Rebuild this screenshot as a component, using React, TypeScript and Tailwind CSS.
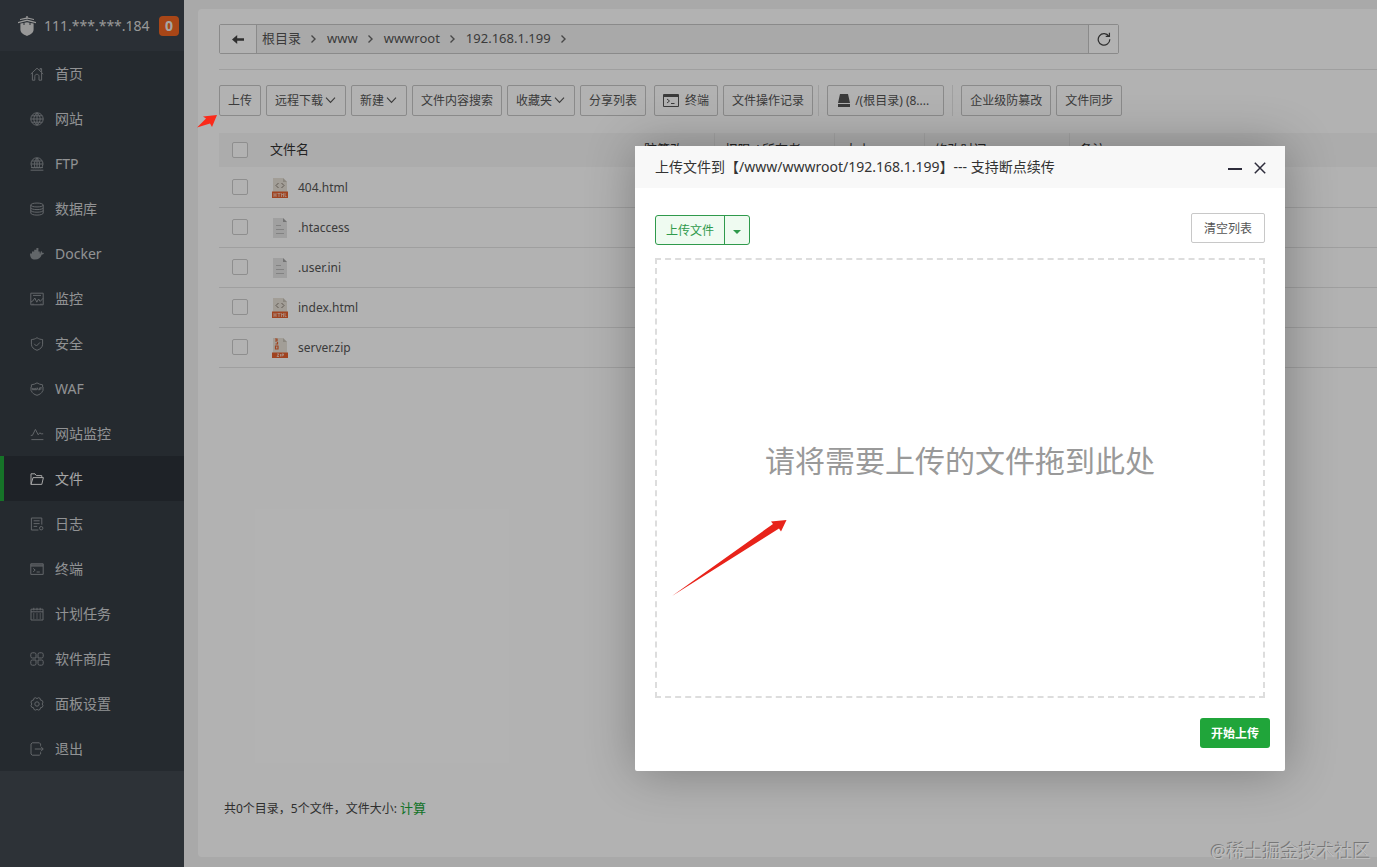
import { Fragment, type ReactNode } from "react";
import clsx from "clsx";

type MenuItem = { label: string; icon: ReactNode; active?: boolean };
type FileKind = "html" | "text" | "zip";

const toolClass =
    "flex h-[31px] shrink-0 items-center rounded-xs border border-[#c6c6c6] bg-white px-2 text-xs whitespace-nowrap text-[#555]";
const checkboxClass = "block size-4 appearance-none rounded-xs border border-[#ccc] bg-white";

const menu: MenuItem[] = [
    { label: "首页", icon: <path d="M.8 7 7 1.2 13.2 7M10 3.6V1.6h1.6v3.6M2.4 6v7.2h2.4V9.4c0-2.8 4.2-2.8 4.2 0v3.8h2.6V6" /> },
    {
        label: "网站",
        icon: <path d="M13.2 7A6.2 6.2 0 1 1 .8 7a6.2 6.2 0 0 1 12.4 0ZM.8 7h12.4M1.8 3.8h10.4M1.8 10.2h10.4M7 .8v12.4M7 .8c-4.2 3.6-4.2 8.8 0 12.4M7 .8c4.2 3.6 4.2 8.8 0 12.4" />,
    },
    {
        label: "FTP",
        icon: <path d="M3.2 11.4a6 6 0 1 1 7.6 0M1 7h12M2 4h10M7 1v10.4M7 1C4 4.4 4 8 5.2 11.4M7 1c3 3.4 3 7 1.8 10.4M.6 13.2h12.8M1 10.6h12" />,
    },
    {
        label: "数据库",
        icon: <path d="M.8 3c0-2.6 12.4-2.6 12.4 0S.8 5.6.8 3ZM.8 3v8c0 2.8 12.4 2.8 12.4 0V3M.8 5.8c0 2.4 12.4 2.4 12.4 0M.8 8.4c0 2.4 12.4 2.4 12.4 0" />,
    },
    {
        label: "Docker",
        icon: <path fill="currentColor" stroke="none" d="M0 6.6h2V4.6h2.2V2.8h2.2V1h2v3.6h1.4v2h.8c-.3-1.1 0-2 .6-2.5.6.4.9 1 .9 1.7.7-.1 1.3 0 1.9.4-.4.9-1.2 1.2-2.2 1.2C10.7 10.8 8.5 12.6 5 12.6c-3.4 0-5-2.2-5-6Z" />,
    },
    {
        label: "监控",
        icon: <path d="M.8 1.2h12.4v11.6H.8ZM3 3.4h8M.8 10l2-1 2-3 2 4.2L8.6 7l1.6 2.4 3-3.2M3 12.8v-1.2M11 12.8v-1.2" />,
    },
    { label: "安全", icon: <path d="M7 .7c1.8 1.3 3.6 1.8 5.6 1.8v4.7c0 3-2.4 5-5.6 6.1-3.2-1.1-5.6-3.1-5.6-6.1V2.5C3.4 2.5 5.2 2 7 .7ZM4.2 6.8l2.2 2.2 3.6-3.6" /> },
    {
        label: "WAF",
        icon: <path d="M1.4 5V2.8C3.4 2.6 5.2 2 7 .9c1.8 1.1 3.6 1.7 5.6 1.9V5M1.4 8.8c.6 2.3 2.8 3.7 5.6 4.5 2.8-.8 5-2.2 5.6-4.5M1 5v3.8M13 5v3.8M2 5.8l1 2.4 1-2 1 2 1-2.4M6.4 8.2l1-2.4 1 2.4M9.6 8.2V5.8h2.2M9.6 7h1.8" />,
    },
    { label: "网站监控", icon: <path d="M.8 8.4h1.6L5.4 2.4l2.8 5.4 1.6-2 1.4 1h2M1.4 12.6h12" /> },
    { label: "文件", active: true, icon: <path d="M1 12.4V1.8h4l1.4 1.8h5.4v2M1 12.4 3 5.6h10.4l-1.6 6.8H1Z" /> },
    {
        label: "日志",
        icon: <path d="M8.4 13H1.4V1h10.4v6.6M3.6 3.8h6M3.6 6.6h6M3.6 9.4h3.6M12.9 11.2a1.7 1.7 0 1 1-3.4 0 1.7 1.7 0 0 1 3.4 0Z" />,
    },
    { label: "终端", icon: <path d="M.8 1.8h12.4v10.6H.8ZM.8 3h12.4M.8 4h12.4M3.2 6.4l2 1.7-2 1.7M6.6 10h3.2" /> },
    {
        label: "计划任务",
        icon: <path d="M1 2.2h12V13H1ZM1 4.8h12M3.8.8v2.6M7 .8v2.6M10.2.8v2.6M3 7h1.4M6.3 7h1.4M9.6 7H11M3 9h1.4M6.3 9h1.4M9.6 9H11M3 11h1.4M6.3 11h1.4M9.6 11H11" />,
    },
    {
        label: "软件商店",
        icon: <path d="M2.4.8h2A1.6 1.6 0 0 1 6 2.4V6H2.4A1.6 1.6 0 0 1 .8 4.4v-2A1.6 1.6 0 0 1 2.4.8ZM9.6.8h2a1.6 1.6 0 0 1 1.6 1.6v2A1.6 1.6 0 0 1 11.6 6H8V2.4A1.6 1.6 0 0 1 9.6.8ZM2.4 8H6v3.6a1.6 1.6 0 0 1-1.6 1.6h-2a1.6 1.6 0 0 1-1.6-1.6v-2A1.6 1.6 0 0 1 2.4 8ZM8 8h3.6a1.6 1.6 0 0 1 1.6 1.6v2a1.6 1.6 0 0 1-1.6 1.6h-2A1.6 1.6 0 0 1 8 11.6Z" />,
    },
    {
        label: "面板设置",
        icon: <path d="M7 1.6 8.6.7l1.5.7.4 1.7 1.7.4.8 1.6L12.200 7l.8 1.7-.8 1.600-1.700.400-.400 1.700-1.500.7L7 12.400l-1.600.7-1.500-.7-.4-1.700-1.700-.4L1 8.700 1.800 7 1 5.100l.8-1.600 1.700-.4.4-1.700L5.400.700ZM9.200 7a2.200 2.200 0 1 1-4.400 0 2.200 2.200 0 0 1 4.400 0Z" />,
    },
    { label: "退出", icon: <path d="M10.6 3.8V2L9.4.8H2.200L1 2v10l1.200 1.200h7.200l1.200-1.200v-1.800M4.800 7h8.400M10.800 4.600 13.200 7l-2.400 2.400" /> },
];

const crumbs = ["根目录", "www", "wwwroot", "192.168.1.199"];

const files: { name: string; kind: FileKind }[] = [
    { name: "404.html", kind: "html" },
    { name: ".htaccess", kind: "text" },
    { name: ".user.ini", kind: "text" },
    { name: "index.html", kind: "html" },
    { name: "server.zip", kind: "zip" },
];

const columns = [
    { label: "防篡改", width: "w-20" },
    { label: "权限 / 所有者", width: "w-[120px]" },
    { label: "大小", width: "w-[90px]" },
    { label: "修改时间", width: "w-[145px]" },
    { label: "备注", width: "" },
];

function Chevron() {
    return (
        <svg className="size-2 shrink-0" viewBox="0 0 8 8" fill="none" stroke="#666" strokeWidth="1.4">
            <path d="M1.500.6 5 4 1.500 7.400" />
        </svg>
    );
}

function Caret() {
    return (
        <svg className="ml-px h-[7px] w-[13px]" viewBox="0 0 13 7" fill="none" stroke="#555" strokeWidth="1.1">
            <path d="m2 .6 4.500 4.800L11 .6" />
        </svg>
    );
}

function FileIcon({ kind }: { kind: FileKind }) {
    return (
        <svg className="h-5 w-4 shrink-0" viewBox="0 0 16 20">
            <path d="M1 0h10l4 4v16H1Z" fill={kind === "text" ? "#e6e6e6" : "#e8e2d8"} />
            <path d="M11 0v4h4Z" fill={kind === "text" ? "#a5a5a5" : "#c9c3b8"} />
            {kind === "text" && <path d="M4 7.500h5M4 11.500h8M4 15.500h8" stroke="#bbb" />}
            {kind === "html" && (
                <>
                    <path d="M6.500 5 4 7.500 6.500 10M9.500 5 12 7.500 9.500 10" fill="none" stroke="#8a7f76" />
                    <path d="M0 13.500h16V20H0Z" fill="#e5602f" />
                    <path d="M2 15v4M2 17h2M4 15v4M5.500 15.500h3M7 15.500V19M9.500 19v-3.500l1 1.500 1-1.500V19M13 15v3.500h1.500" fill="none" stroke="#f6d3c4" strokeWidth=".8" />
                </>
            )}
            {kind === "zip" && (
                <>
                    <path d="M3 1h2v2H3M5.500 4v2H3.500M3.500 8h2.500v3H3.500Z" fill="none" stroke="#e5602f" strokeWidth="1.200" />
                    <path d="M0 14.500h16V20H0Z" fill="#e5602f" />
                    <path d="M5 16h2l-2 2.500h2M8.500 16v2.500M10 18.500V16h1.500v1.200H10" fill="none" stroke="#f6d3c4" strokeWidth=".9" />
                </>
            )}
        </svg>
    );
}

function Sidebar() {
    return (
        <aside className="w-[184px] shrink-0 bg-[#414850]">
            <div className="flex h-[51px] items-center bg-[#3d444c] pr-[5px] pl-[18px]">
                <svg className="h-5 w-[18px]" viewBox="0 0 18 20" fill="#dadada">
                    <path d="M8.300 0h1.400v1.500L16 3v1L9.700 2.800 2 4V3l6.300-1.500ZM0 6l9-2.600L18 6v1.200L9 5 0 7.200Z" />
                    <path d="M2.400 7.600 5.500 7v2h1V6.800L9 6.200l2.500.6V9h1V7l3.100.6v6c0 3-2.400 5-6.600 6.400-4.200-1.400-6.600-3.400-6.600-6.400Z" />
                </svg>
                <span className="ml-2 text-sm text-[#dadada]">111.***.***.184</span>
                <span className="ml-auto flex size-5 items-center justify-center rounded-sm bg-[#f16522] text-sm font-bold text-[#eee]">
                    0
                </span>
            </div>
            <nav className="bg-[#363d44]">
                {menu.map((item) => (
                    <a
                        key={item.label}
                        href="#"
                        className={clsx(
                            "flex h-[45px] items-center gap-[11px] border-l-4 pl-[26px] text-sm",
                            item.active
                                ? "border-[#20a53a] bg-[#2c3138] text-[#eee]"
                                : "border-transparent text-[#d0d2d4]"
                        )}
                    >
                        <svg
                            className={clsx("size-[14px]", !item.active && "text-[#8d9297]")}
                            viewBox="0 0 14 14"
                            fill="none"
                            stroke="currentColor"
                            strokeWidth="1"
                        >
                            {item.icon}
                        </svg>
                        {item.label}
                    </a>
                ))}
            </nav>
        </aside>
    );
}

function PathBar() {
    return (
        <div className="flex h-[30px] w-[900px] max-w-full rounded-xs border border-[#c6c6c6] bg-[#f3f3f3] text-[13px] text-[#555]">
            <button type="button" aria-label="返回" className="flex w-[37px] items-center justify-center border-r border-[#c6c6c6] bg-white">
                <svg className="h-[9px] w-3" viewBox="0 0 12 9" fill="#444">
                    <path d="M0 4.500 5.200 0v3.300H12v2.400H5.200V9Z" />
                </svg>
            </button>
            <div className="flex grow items-center gap-[9px] pl-[5px]">
                {crumbs.map((crumb) => (
                    <Fragment key={crumb}>
                        <a href="#">{crumb}</a>
                        <Chevron />
                    </Fragment>
                ))}
            </div>
            <button type="button" aria-label="刷新" className="flex w-[30px] items-center justify-center border-l border-[#c6c6c6] bg-white">
                <svg className="size-[14px]" viewBox="0 0 16 16" fill="none" stroke="#444" strokeWidth="1.400">
                    <path d="M13.600 5A6.600 6.600 0 1 0 14.600 8.400M14.200.8V5H10" />
                </svg>
            </button>
        </div>
    );
}

function Toolbar() {
    return (
        <div className="flex items-center gap-[5px]">
            <button type="button" className={toolClass}>上传</button>
            <button type="button" className={toolClass}>远程下载<Caret /></button>
            <button type="button" className={toolClass}>新建<Caret /></button>
            <button type="button" className={toolClass}>文件内容搜索</button>
            <button type="button" className={toolClass}>收藏夹<Caret /></button>
            <button type="button" className={toolClass}>分享列表</button>
            <button type="button" className={clsx(toolClass, "ml-[3px] gap-1.5")}>
                <svg className="h-[13px] w-4" viewBox="0 0 16 13" fill="none" stroke="#555">
                    <path d="M.5.500h15v12H.5ZM.5 1.500h15M.5 2.500h15M4 5l2.500 2L4 9M8 9.500h3.500" />
                </svg>
                终端
            </button>
            <button type="button" className={toolClass}>文件操作记录</button>
            <span className="h-[31px] w-px bg-[#e6e6e6]" />
            <button type="button" className={clsx(toolClass, "ml-[3px] w-[117px] gap-[5px] pl-2.5")}>
                <svg className="h-[13px] w-3 shrink-0" viewBox="0 0 12 13" fill="#555">
                    <path d="M2 0h8l2 9H0ZM0 10h12v3H0Z" />
                </svg>
                /(根目录) (8....
            </button>
            <span className="ml-[3px] h-[31px] w-px bg-[#e6e6e6]" />
            <button type="button" className={clsx(toolClass, "ml-[3px]")}>企业级防篡改</button>
            <button type="button" className={toolClass}>文件同步</button>
        </div>
    );
}

function FileTable() {
    return (
        <table className="w-full table-fixed text-left text-[13px] text-[#555]">
            <thead className="bg-[#f6f6f6] text-[#333]">
                <tr className="h-[34px]">
                    <th className="w-[50px] pl-[13px]">
                        <input type="checkbox" aria-label="全选" className={checkboxClass} />
                    </th>
                    <th className="w-[365px] pl-px font-normal">文件名</th>
                    {columns.map((column) => (
                        <th
                            key={column.label}
                            className={clsx("border-r border-[#e8e8e8] pl-2.5 font-normal whitespace-nowrap last:border-r-0", column.width)}
                        >
                            {column.label}
                        </th>
                    ))}
                </tr>
            </thead>
            <tbody>
                {files.map((file) => (
                    <tr key={file.name} className="h-10 border-b border-[#e4e4e4]">
                        <td className="pl-[13px]">
                            <input type="checkbox" aria-label={file.name} className={checkboxClass} />
                        </td>
                        <td colSpan={6}>
                            <a href="#" className="flex items-center gap-2.5 pt-0.5 pl-[3px] text-xs">
                                <FileIcon kind={file.kind} />
                                {file.name}
                            </a>
                        </td>
                    </tr>
                ))}
            </tbody>
        </table>
    );
}

function UploadDialog() {
    return (
        <div
            role="dialog"
            aria-labelledby="upload-title"
            className="w-[650px] rounded-xs bg-white shadow-[1px_1px_50px_rgba(0,0,0,0.3)]"
        >
            <div className="flex h-[42px] items-center bg-[#f8f8f8] pr-[18px] pl-5">
                <h2 id="upload-title" className="grow text-sm text-[#333]">
                    上传文件到【/www/wwwroot/192.168.1.199】--- 支持断点续传
                </h2>
                <button type="button" aria-label="最小化" className="mr-2.5 flex size-4 items-center justify-center">
                    <span className="mt-1 h-0.5 w-[14px] bg-[#2d2c3b]" />
                </button>
                <button type="button" aria-label="关闭" className="flex size-[14px] items-center justify-center">
                    <svg className="mt-0.5 size-3" viewBox="0 0 12 12" stroke="#2d2c3b" strokeWidth="1.500">
                        <path d="m.8.800 10.400 10.400M11.200.800.800 11.200" />
                    </svg>
                </button>
            </div>
            <div className="px-5 pt-[25px]">
                <div className="flex justify-between">
                    <div className="mt-0.5 flex h-[30px] rounded-[3px] border border-[#2f9a4c] bg-[#effbf1] text-xs text-[#2f9a4c]">
                        <button type="button" className="px-2.5 pt-0.5">上传文件</button>
                        <button type="button" aria-label="更多上传方式" className="flex w-[25px] items-center justify-center border-l border-[#2f9a4c]">
                            <svg className="mt-1 h-1 w-2" viewBox="0 0 8 4" fill="currentColor">
                                <path d="M0 0h8L4 4Z" />
                            </svg>
                        </button>
                    </div>
                    <button type="button" className="h-[30px] rounded-xs border border-[#c8c8c8] px-3 pt-0.5 text-xs text-[#555]">
                        清空列表
                    </button>
                </div>
                <div className="relative mt-[13px] flex h-[440px] items-center justify-center border-2 border-dashed border-[#ddd] pb-[34px] text-3xl text-[#999]">
                    请将需要上传的文件拖到此处
                    <svg className="absolute top-[259px] left-[14px] h-[78px] w-[118px]" viewBox="0 0 118 78" fill="#e8231a">
                        <path d="M1 77 102 5 100 2.500 115.500 1 110 12.500 108 9.500Z" />
                    </svg>
                </div>
            </div>
            <div className="flex justify-end px-[15px] pt-5 pb-[23px]">
                <button type="button" className="h-[30px] rounded-[3px] bg-[#20a53a] px-[11px] pt-0.5 text-xs font-bold text-white">
                    开始上传
                </button>
            </div>
        </div>
    );
}

export default function App() {
    return (
        <div className="relative flex min-h-screen overflow-hidden bg-[#f2f2f2] font-['Noto_Sans','Noto_Sans_CJK_SC',sans-serif]">
            <Sidebar />
            <main className="flex min-w-0 grow pt-[9px] pb-2.5 pl-[14px]">
                <div className="flex min-w-0 grow flex-col rounded-l bg-white pt-[15px] pb-10 pl-[21px]">
                    <PathBar />
                    <hr className="mt-[15px] mb-[15px] border-[#e4e4e4]" />
                    <Toolbar />
                    <div className="mt-[17px]">
                        <FileTable />
                    </div>
                    <p className="mt-auto pl-[5px] text-xs text-[#444]">
                        共0个目录，5个文件，文件大小: <a href="#" className="text-[13px] text-[#20a53a]">计算</a>
                    </p>
                </div>
            </main>

            <div className="absolute inset-0 flex items-start justify-end bg-black/30 pt-[146px] pr-[92px]">
                <UploadDialog />
            </div>

            <svg className="absolute top-[114px] left-[197px] h-[14px] w-[21px]" viewBox="0 0 21 14" fill="#fb2a1a">
                <path d="M0 13.500 9 4.500 6 2.500 20 1 15 13 13 9.500Z" />
            </svg>
            <span className="absolute right-[6px] bottom-0.5 text-lg text-[#bdbdbd] [text-shadow:-1px_-1px_0_#777]">
                @稀土掘金技术社区
            </span>
        </div>
    );
}
